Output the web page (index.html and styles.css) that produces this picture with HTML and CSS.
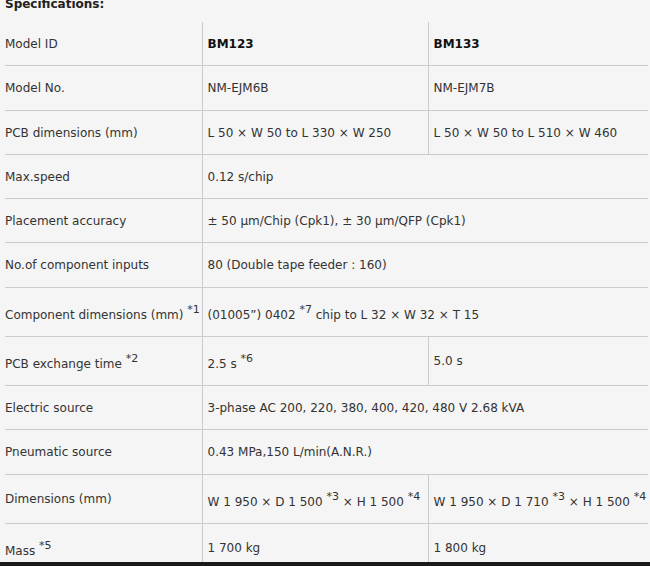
FILE: index.html
```html
<!DOCTYPE html>
<html lang="en">
<head>
<meta charset="utf-8">
<title>Specifications</title>
<link rel="stylesheet" href="styles.css">
</head>
<body>
<div class="page">
  <h2 class="title">Specifications:</h2>
  <table class="spec">
    <colgroup>
      <col class="c1"><col class="c2"><col class="c3">
    </colgroup>
    <tbody>
      <tr><td class="label">Model ID</td><td class="val head">BM123</td><td class="val head">BM133</td></tr>
      <tr><td class="label">Model No.</td><td class="val">NM-EJM6B</td><td class="val">NM-EJM7B</td></tr>
      <tr><td class="label">PCB dimensions (mm)</td><td class="val">L 50 × W 50 to L 330 × W 250</td><td class="val">L 50 × W 50 to L 510 × W 460</td></tr>
      <tr><td class="label">Max.speed</td><td class="val" colspan="2">0.12 s/chip</td></tr>
      <tr><td class="label">Placement accuracy</td><td class="val" colspan="2">± 50 μm/Chip (Cpk1), ± 30 μm/QFP (Cpk1)</td></tr>
      <tr><td class="label">No.of component inputs</td><td class="val" colspan="2">80 (Double tape feeder : 160)</td></tr>
      <tr><td class="label">Component dimensions (mm) <sup>*1</sup></td><td class="val" colspan="2">(01005”) 0402 <sup>*7</sup> chip to L 32 × W 32 × T 15</td></tr>
      <tr><td class="label">PCB exchange time <sup>*2</sup></td><td class="val">2.5 s <sup>*6</sup></td><td class="val">5.0 s</td></tr>
      <tr><td class="label">Electric source</td><td class="val" colspan="2">3-phase AC 200, 220, 380, 400, 420, 480 V 2.68 kVA</td></tr>
      <tr><td class="label">Pneumatic source</td><td class="val" colspan="2">0.43 MPa,150 L/min(A.N.R.)</td></tr>
      <tr><td class="label">Dimensions (mm)</td><td class="val">W 1 950 × D 1 500 <sup>*3</sup> × H 1 500 <sup>*4</sup></td><td class="val">W 1 950 × D 1 710 <sup>*3</sup> × H 1 500 <sup>*4</sup></td></tr>
      <tr><td class="label">Mass <sup>*5</sup></td><td class="val">1 700 kg</td><td class="val">1 800 kg</td></tr>
    </tbody>
  </table>
</div>
<div class="bottom-edge"></div>
</body>
</html>
```
FILE: styles.css
```css
html, body {
  margin: 0;
  padding: 0;
  background: #f5f5f5;
}
body {
  font-family: "DejaVu Sans", Verdana, sans-serif;
  font-size: 12px;
  color: #333;
  overflow: hidden;
}
.page {
  padding-left: 5px;
}
.title {
  font-size: 12px;
  font-weight: bold;
  line-height: 16px;
  margin: -4px 0 10px 0;
  color: #222;
}
.spec {
  border-collapse: collapse;
  width: 643px;
  table-layout: fixed;
}
.c1 { width: 197px; }
.c2 { width: 226px; }
.c3 { width: 220px; }
.spec td {
  border-bottom: 1px solid #c8cccc;
  padding: 15px 5px 14.25px 5px;
  line-height: 14px;
  vertical-align: middle;
  white-space: nowrap;
}
.spec td.label {
  padding-left: 0;
}
.spec td.val {
  border-left: 1px solid #c8cccc;
}
.spec td.head {
  font-weight: bold;
  color: #111;
}
sup {
  font-size: 11px;
  line-height: 14px;
  vertical-align: 6px;
}
.bottom-edge {
  position: fixed;
  left: 0;
  right: 0;
  bottom: 0;
  height: 4px;
  background: #1a1a1a;
}
```
